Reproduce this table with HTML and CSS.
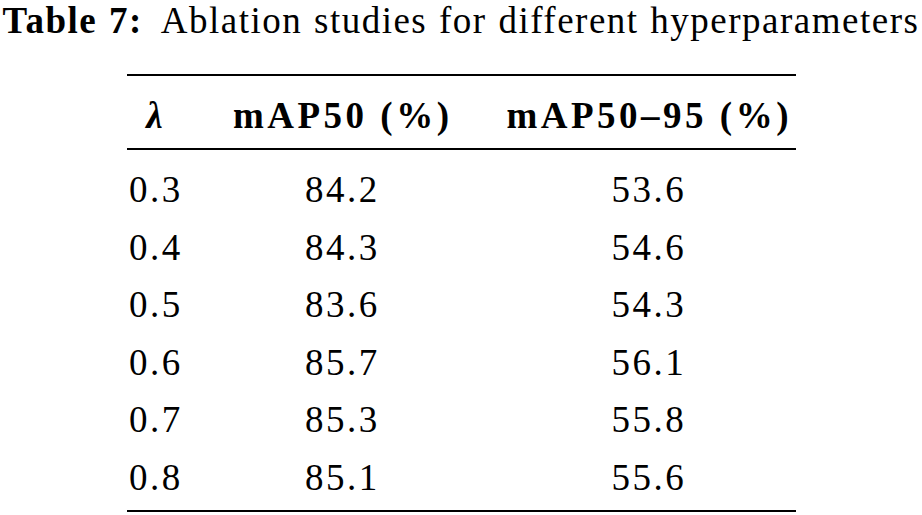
FILE: index.html
```html
<!DOCTYPE html>
<html lang="en">
<head>
<meta charset="utf-8">
<title>Table 7</title>
<link rel="stylesheet" href="styles.css">
</head>
<body>
<div class="page">
  <p class="caption"><span class="label">Table 7:</span>Ablation studies for different hyperparameters</p>
  <table class="results">
    <colgroup>
      <col class="c1">
      <col class="c2">
      <col class="c3">
    </colgroup>
    <thead>
      <tr>
        <th class="lambda">λ</th>
        <th>mAP50 (%)</th>
        <th>mAP50–95 (%)</th>
      </tr>
    </thead>
    <tbody>
      <tr><td>0.3</td><td>84.2</td><td>53.6</td></tr>
      <tr><td>0.4</td><td>84.3</td><td>54.6</td></tr>
      <tr><td>0.5</td><td>83.6</td><td>54.3</td></tr>
      <tr><td>0.6</td><td>85.7</td><td>56.1</td></tr>
      <tr><td>0.7</td><td>85.3</td><td>55.8</td></tr>
      <tr><td>0.8</td><td>85.1</td><td>55.6</td></tr>
    </tbody>
  </table>
</div>
</body>
</html>
```
FILE: styles.css
```css
html, body {
  margin: 0;
  padding: 0;
  background: #ffffff;
}

.page {
  width: 922px;
  font-family: "Liberation Serif", "Times New Roman", serif;
  font-size: 37px;
  color: #000000;
}

.caption {
  margin: 0;
  height: 74px;
  line-height: 42px;
  text-align: center;
  white-space: nowrap;
  letter-spacing: 1.5px;
  word-spacing: 1px;
}

.caption .label {
  font-weight: bold;
  margin-right: 18px;
}

.results {
  width: 669px;
  margin: 0 auto;
  border-collapse: collapse;
  table-layout: fixed;
  border-top: 2px solid #000;
  border-bottom: 2px solid #000;
}

.c1 { width: 56px; }
.c2 { width: 317px; }
.c3 { width: 296px; }

.results th,
.results td {
  padding: 0;
  text-align: center;
  white-space: nowrap;
}

.results thead tr {
  border-bottom: 2px solid #000;
}

.results th {
  font-weight: bold;
  padding-top: 7px;
  line-height: 65px;
  letter-spacing: 3.5px;
  text-indent: 3.5px;
}

.results th.lambda {
  font-style: italic;
  letter-spacing: 0;
  text-indent: 0;
}

.results td {
  line-height: 57.5px;
  letter-spacing: 2.5px;
  text-indent: 2.5px;
}

.results tbody tr:first-child td {
  padding-top: 11px;
}

.results tbody tr:last-child td {
  padding-bottom: 4px;
}
```
